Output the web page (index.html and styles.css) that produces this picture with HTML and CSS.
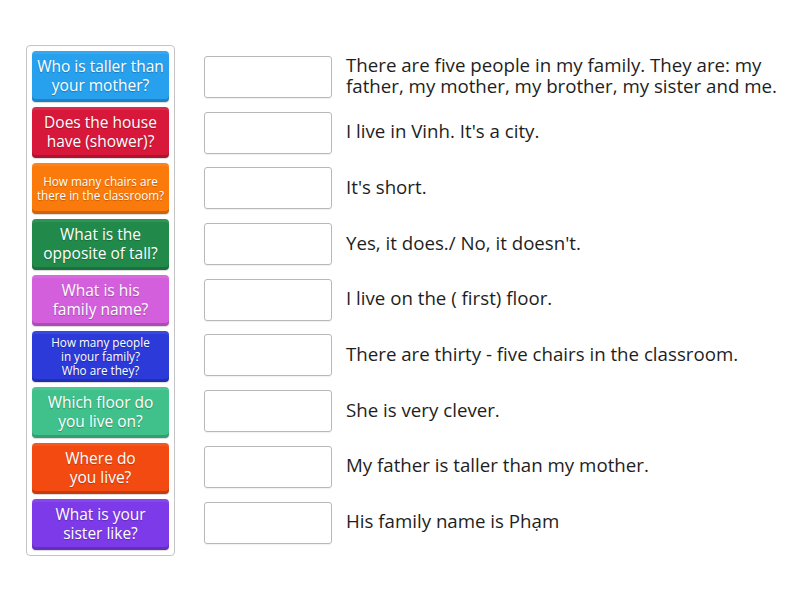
FILE: index.html
```html
<!DOCTYPE html>
<html>
<head>
<meta charset="utf-8">
<link rel="stylesheet" href="styles.css">
</head>
<body>
<div class="page">
  <div class="bank">
    <div class="tile c1"><span>Who is taller than your mother?</span></div>
    <div class="tile c2"><span>Does the house have (shower)?</span></div>
    <div class="tile c3 small"><span>How many chairs are there in the classroom?</span></div>
    <div class="tile c4"><span>What is the opposite of tall?</span></div>
    <div class="tile c5"><span class="w95">What is his family name?</span></div>
    <div class="tile c6 small"><span class="w95">How many people in your family? Who are they?</span></div>
    <div class="tile c7"><span>Which floor do you live on?</span></div>
    <div class="tile c8"><span class="w75">Where do you live?</span></div>
    <div class="tile c9"><span>What is your sister like?</span></div>
  </div>
  <div class="rows">
    <div class="row"><div class="slot"></div><div class="answer">There are five people in my family. They are: my father, my mother, my brother, my sister and me.</div></div>
    <div class="row"><div class="slot"></div><div class="answer">I live in Vinh. It's a city.</div></div>
    <div class="row"><div class="slot"></div><div class="answer">It's short.</div></div>
    <div class="row"><div class="slot"></div><div class="answer">Yes, it does./ No, it doesn't.</div></div>
    <div class="row"><div class="slot"></div><div class="answer">I live on the ( first) floor.</div></div>
    <div class="row"><div class="slot"></div><div class="answer">There are thirty - five chairs in the classroom.</div></div>
    <div class="row"><div class="slot"></div><div class="answer">She is very clever.</div></div>
    <div class="row"><div class="slot"></div><div class="answer">My father is taller than my mother.</div></div>
    <div class="row"><div class="slot"></div><div class="answer">His family name is Phạm</div></div>
  </div>
</div>
</body>
</html>
```
FILE: styles.css
```css
html, body {
  margin: 0;
  padding: 0;
  background: #fff;
}
body {
  width: 800px;
  height: 600px;
  overflow: hidden;
  font-family: "Open Sans", "Liberation Sans", sans-serif;
  font-variant-ligatures: none;
}
.page {
  display: flex;
  align-items: flex-start;
  padding: 45px 0 0 26px;
}
.bank {
  width: 137px;
  padding: 5px;
  border: 1px solid #c4c4c4;
  border-radius: 4px;
  display: flex;
  flex-direction: column;
  gap: 5px;
}
.tile {
  height: 51px;
  border-radius: 4px;
  color: #fff;
  font-size: 15.5px;
  line-height: 19px;
  text-align: center;
  display: flex;
  align-items: center;
  justify-content: center;
  padding: 0 3px 2px;
  box-sizing: border-box;
  text-shadow: 0 1px 1px rgba(0,0,0,0.25);
  box-shadow: inset 0 -3px 0 rgba(0,0,0,0.18), inset 0 3px 0 rgba(255,255,255,0.08), 0 1px 1px rgba(0,0,0,0.15);
}
.tile.small {
  font-size: 11.7px;
  line-height: 14px;
  padding: 0 1px 2px;
}
.w95 { max-width: 100px; }
.w75 { max-width: 75px; }
.c1 { background: #27a0ee; }
.c2 { background: #d7183a; }
.c3 { background: #fb7a0c; }
.c4 { background: #218a4b; }
.c5 { background: #d45fdc; }
.c6 { background: #2b3ad8; }
.c7 { background: #40c08a; }
.c8 { background: #f24a10; }
.c9 { background: #7c3ae8; }
.rows {
  margin-left: 29px;
  margin-top: 11px;
  display: flex;
  flex-direction: column;
}
.row {
  height: 55.7px;
  display: flex;
  align-items: flex-start;
}
.slot {
  flex: none;
  width: 126px;
  height: 40px;
  border: 1px solid #b8b8b8;
  border-radius: 3px;
  box-shadow: 0 1px 1px rgba(0,0,0,0.06);
}
.answer {
  margin-left: 14px;
  width: 440px;
  height: 38px;
  display: flex;
  align-items: center;
  font-size: 18.7px;
  line-height: 21px;
  color: #1e1e1e;
}
```
